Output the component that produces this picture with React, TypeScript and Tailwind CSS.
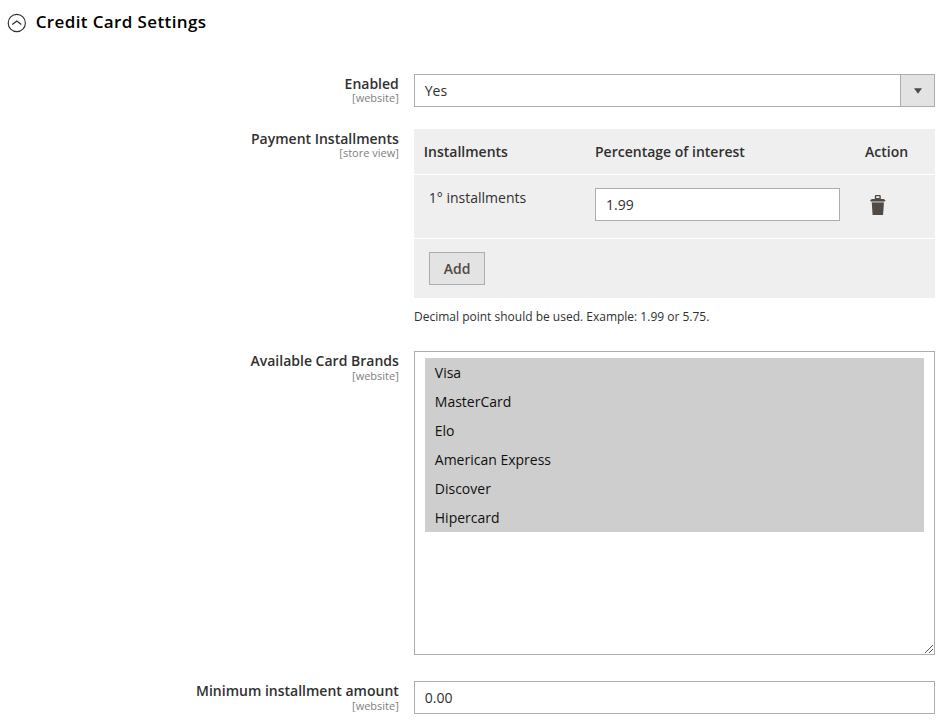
import React from "react";

const brands = ["Visa", "MasterCard", "Elo", "American Express", "Discover", "Hipercard"];

function Label({ text, scope, tight = false }: { text: string; scope: string; tight?: boolean }) {
  return (
    <div className="w-[399px] shrink-0 pr-[0.2px] text-right">
      <div className={tight ? "h-[18px] text-[14px] leading-[19px] font-semibold" : "h-[19px] text-[14px] leading-[19px] font-semibold"}>{text}</div>
      <div className="text-[11px] leading-[11px] text-[#808080]">{scope}</div>
    </div>
  );
}

export default function App() {
  return (
    <div className="h-[725px] w-[948px] overflow-hidden bg-white font-['Open_Sans',sans-serif] text-[14px] text-[#303030]">
      <header className="flex h-[74px] items-start pl-[7px]">
        <svg className="mt-[13px] h-5 w-5" viewBox="0 0 20 20" fill="none" stroke="#303030">
          <circle cx="9.8" cy="10" r="8.6" strokeWidth="1.15" />
          <path d="M5.3 11.6 9.8 8 14.3 11.6" strokeWidth="1.3" />
        </svg>
        <h1 className="mt-[10px] ml-[8.7px] text-[17px] leading-6 font-semibold tracking-[0.38px] text-black">Credit Card Settings</h1>
      </header>

      <div className="flex h-[55px] gap-[15px]">
        <Label text="Enabled" scope="[website]" tight />
        <div className="flex h-[33px] w-[521px] border border-[#adadad]">
          <div className="flex-1 pl-[9.8px] leading-[31px]">Yes</div>
          <div className="flex w-[34px] items-center justify-center border-l border-[#adadad] bg-[#e3e3e3]">
            <svg width="8" height="6" viewBox="0 0 8 6"><path d="M0 .3h8L4 5.8z" fill="#514943" /></svg>
          </div>
        </div>
      </div>

      <div className="flex h-[222px] gap-[15px]">
        <Label text="Payment Installments" scope="[store view]" tight />
        <div className="w-[521px]">
          <div className="h-[169px] bg-[#efefef]">
            <div className="flex h-[46px] border-b border-white leading-[45px] font-semibold">
              <div className="w-[181px] pl-[9.8px]">Installments</div>
              <div className="w-[255px]">Percentage of interest</div>
              <div className="pl-[15px]">Action</div>
            </div>
            <div className="flex h-[64px] border-b border-white">
              <div className="w-[181px] pt-[13px] pl-[14.8px] leading-[19px]">1° installments</div>
              <div className="mt-[13px] h-[33px] w-[245px] border border-[#adadad] bg-white pl-[10px] leading-[31px]">1.99</div>
              <svg className="mt-[20px] ml-[30px]" width="16" height="20" viewBox="0 0 16 20" fill="#514943">
                <path d="M4.8 4V1.2Q4.8 0 6 0h3.6q1.2 0 1.2 1.2V4h2.7L15.3 5v1.2H.3V5L2 4zM6.2 1.2V3h3.2V1.2z" fillRule="evenodd" />
                <path d="M1.3 6.2h13v1.2h-13z" opacity=".5" />
                <path d="M1.8 7.4h12.1L13.1 20H2.6z" />
              </svg>
            </div>
            <div className="pt-[13px] pl-[15px]">
              <button className="block h-[33px] w-[56px] border border-[#adadad] bg-[#e3e3e3] font-semibold text-[#514943]">Add</button>
            </div>
          </div>
          <p className="mt-[11px] text-[12px] leading-4">Decimal point should be used. Example: 1.99 or 5.75.</p>
        </div>
      </div>

      <div className="flex h-[330px] gap-[15px]">
        <Label text="Available Card Brands" scope="[website]" />
        <div className="relative h-[304px] w-[521px] border border-[#adadad] px-[10px] pt-[6px]">
          {brands.map((brand) => (
            <div key={brand} className="h-[29px] bg-[#cecece] pl-[9.8px] leading-[29px] text-[#101010]">{brand}</div>
          ))}
          <svg className="absolute right-px bottom-px" width="8" height="8" viewBox="0 0 8 8" fill="#555" shapeRendering="crispEdges">
            <path d="M0 7h1v1H0zM1 6h1v1H1zM2 5h1v1H2zM3 4h1v1H3zM4 3h1v1H4zM5 2h1v1H5zM6 1h1v1H6zM7 0h1v1H7zM4 7h1v1H4zM5 6h1v1H5zM6 5h1v1H6zM7 4h1v1H7z" />
          </svg>
        </div>
      </div>

      <div className="flex gap-[15px]">
        <Label text="Minimum installment amount" scope="[website]" />
        <div className="h-[33px] w-[521px] border border-[#adadad] pl-[9.8px] leading-[31px]">0.00</div>
      </div>
    </div>
  );
}
